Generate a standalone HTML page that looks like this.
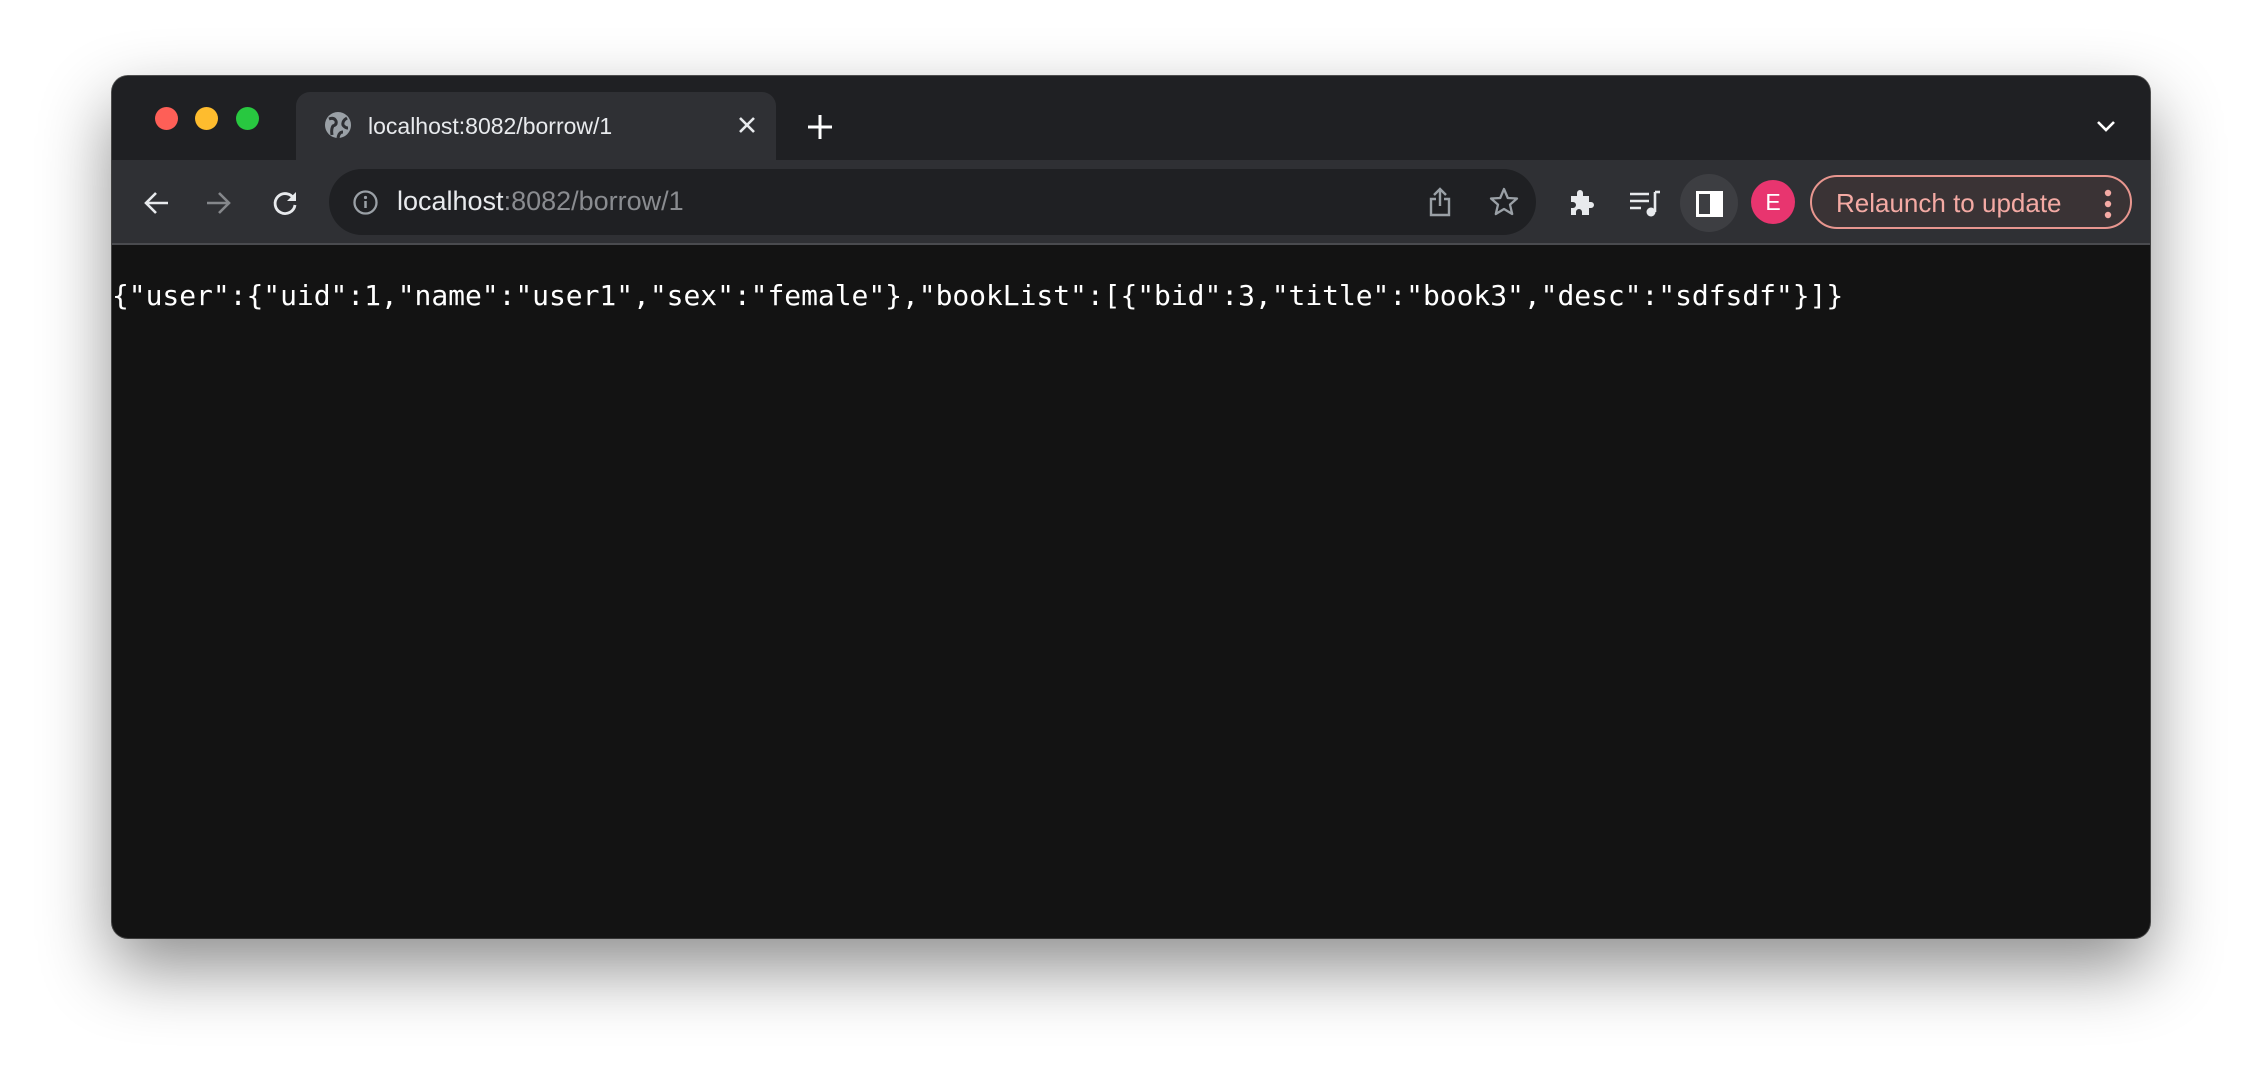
<!DOCTYPE html>
<html><head><meta charset="utf-8">
<style>
*{margin:0;padding:0;box-sizing:border-box}
html,body{width:2262px;height:1088px;background:#fff;overflow:hidden;font-family:"Liberation Sans",sans-serif}
.win{position:absolute;left:112px;top:76px;width:2038px;height:862px;border-radius:16px;background:#131313;overflow:hidden;box-shadow:0 30px 70px rgba(0,0,0,.45),0 0 0 1px #555;}
.tabbar{position:absolute;left:0;top:0;width:100%;height:84px;background:#1f2023}
.tl{position:absolute;top:31px;width:23px;height:23px;border-radius:50%}
.tab{position:absolute;left:184px;top:16px;width:480px;height:70px;background:#2f3034;border-radius:14px 14px 0 0}
.tabtxt{position:absolute;left:72px;top:21px;color:#e8eaed;font-size:23px}
.toolbar{position:absolute;left:0;top:84px;width:100%;height:85px;background:#2f3034;border-bottom:2px solid #4a4b4f}
.omni{position:absolute;left:217px;top:9px;width:1207px;height:66px;background:#1f2023;border-radius:33px}
.url{position:absolute;left:68px;top:17px;font-size:27px;color:#e8eaed}
.url span{color:#8a8c90}
.pill{position:absolute;left:1698px;top:15px;width:322px;height:54px;border:2px solid #e8968f;border-radius:27px;background:#3a3335;color:#f4aaa4;font-size:26px}
.json{position:absolute;left:0;top:203px;color:#fff;font-family:"DejaVu Sans Mono","Liberation Mono",monospace;font-size:28px;white-space:pre;letter-spacing:-0.05px}
svg{position:absolute;overflow:visible}
</style></head><body>
<div class="win">
 <div class="tabbar">
  <div class="tl" style="left:43px;background:#fe5f57"></div>
  <div class="tl" style="left:83px;background:#febc2e"></div>
  <div class="tl" style="left:124px;background:#28c840"></div>
  <div class="tab">
   <svg style="left:28px;top:19px" width="28" height="28" viewBox="0 0 28 28"><circle cx="14" cy="14" r="13" fill="#9aa0a6"/><path d="M5 8 Q10 6 12 10 Q13 14 9 15 Q7 18 8 24 M23 7 Q18 10 19 14 Q21 17 24 17 M14 27 Q15 21 19 21" stroke="#2f3034" stroke-width="3" fill="none"/></svg>
   <div class="tabtxt">localhost:8082/borrow/1</div>
   <svg style="left:442px;top:24px" width="18" height="18" viewBox="0 0 18 18"><path d="M2 2L16 16M16 2L2 16" stroke="#e8eaed" stroke-width="2.6"/></svg>
  </div>
  <svg style="left:695px;top:38px" width="26" height="26" viewBox="0 0 26 26"><path d="M13 1V25M1 13H25" stroke="#fff" stroke-width="3"/></svg>
  <svg style="left:1984px;top:44px" width="20" height="12" viewBox="0 0 20 12"><path d="M2 2L10 10L18 2" stroke="#fff" stroke-width="2.6" fill="none"/></svg>
 </div>
 <div class="toolbar">
  <svg style="left:31px;top:30px" width="26" height="26" viewBox="0 0 26 26"><path d="M25 13H3M13 3L3 13L13 23" stroke="#e8eaed" stroke-width="2.6" fill="none"/></svg>
  <svg style="left:94px;top:30px" width="26" height="26" viewBox="0 0 26 26"><path d="M1 13H23M13 3L23 13L13 23" stroke="#85878b" stroke-width="2.6" fill="none"/></svg>
  <svg style="left:160px;top:30px" width="26" height="26" viewBox="0 0 26 26"><path d="M22 9A10 10 0 1 0 23 15" stroke="#e8eaed" stroke-width="2.8" fill="none"/><path d="M24 2V11H15Z" fill="#e8eaed"/></svg>
  <div class="omni">
   <svg style="left:24px;top:21px" width="25" height="25" viewBox="0 0 25 25"><circle cx="12.5" cy="12.5" r="11" stroke="#9aa0a6" stroke-width="2.3" fill="none"/><path d="M12.5 11V18" stroke="#9aa0a6" stroke-width="2.5"/><circle cx="12.5" cy="7.5" r="1.6" fill="#9aa0a6"/></svg>
   <div class="url">localhost<span>:8082/borrow/1</span></div>
   <svg style="left:1099px;top:18px" width="24" height="30" viewBox="0 0 24 30"><path d="M12 2V19M6 8L12 2L18 8M8 12H3V28H21V12H16" stroke="#9aa0a6" stroke-width="2.4" fill="none"/></svg>
   <svg style="left:1160px;top:18px" width="30" height="30" viewBox="0 0 30 30"><path d="M15 2L18.8 11 28 11.5 21 17.6 23.2 27 15 22 6.8 27 9 17.6 2 11.5 11.2 11Z" stroke="#9aa0a6" stroke-width="2.3" fill="none" stroke-linejoin="round"/></svg>
  </div>
  <svg style="left:1455px;top:27px" width="30" height="30" viewBox="0 0 30 30"><path d="M4 9H10V6A3 3 0 0 1 16 6V9H22V15H24A3 3 0 0 1 24 21H22V28H15V25A3 3 0 0 0 9 25V28H4V21H6A3 3 0 0 0 6 15H4Z" fill="#e8eaed"/></svg>
  <svg style="left:1517px;top:28px" width="32" height="30" viewBox="0 0 32 30"><path d="M1 6H20M1 13H20M1 20H12" stroke="#e8eaed" stroke-width="2.6"/><path d="M26 4V24" stroke="#e8eaed" stroke-width="2.6"/><path d="M26 4H31" stroke="#e8eaed" stroke-width="2.6"/><circle cx="22" cy="24" r="4.5" fill="#e8eaed"/></svg>
  <div style="position:absolute;left:1568px;top:14px;width:58px;height:58px;border-radius:29px;background:#3d3e42"></div>
  <svg style="left:1584px;top:31px" width="28" height="26" viewBox="0 0 28 26"><rect x="1.5" y="1.5" width="24" height="23" stroke="#fff" stroke-width="3" fill="none"/><rect x="14" y="1.5" width="11.5" height="23" fill="#fff"/></svg>
  <div style="position:absolute;left:1639px;top:20px;width:44px;height:44px;border-radius:22px;background:#e8356f;color:#fff;font-size:23px;text-align:center;line-height:44px">E</div>
  <div class="pill"><span style="position:absolute;left:24px;top:11px">Relaunch to update</span>
   <svg style="left:292px;top:12px" width="8" height="30" viewBox="0 0 8 30"><circle cx="4" cy="4" r="3.2" fill="#f4aaa4"/><circle cx="4" cy="15" r="3.2" fill="#f4aaa4"/><circle cx="4" cy="26" r="3.2" fill="#f4aaa4"/></svg>
  </div>
 </div>
 <div class="json">{"user":{"uid":1,"name":"user1","sex":"female"},"bookList":[{"bid":3,"title":"book3","desc":"sdfsdf"}]}</div>
</div>
</body></html>
